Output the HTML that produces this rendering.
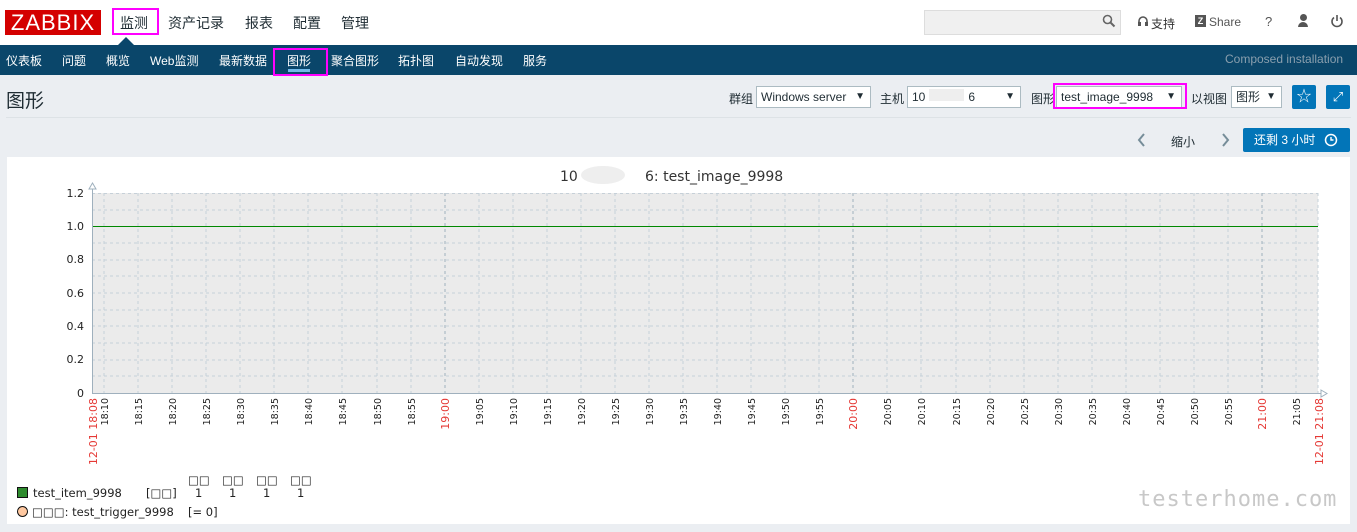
<!DOCTYPE html>
<html><head><meta charset="utf-8"><style>
*{box-sizing:border-box;margin:0;padding:0}
body{width:1357px;height:532px;overflow:hidden;background:#ebeef2;font-family:"Liberation Sans","Noto Sans CJK SC",sans-serif;font-size:13px;color:#1f2c33;position:relative}
.abs{position:absolute}
.top{left:0;top:0;width:1357px;height:45px;background:#fff}
.logo{left:5px;top:10px;width:96px;height:25px;background:#d40000;color:#fff;font-size:22px;line-height:25px;text-align:center;letter-spacing:1px}
.mm{top:13px;font-size:14px;color:#1f2c33}
.nav2{left:0;top:45px;width:1357px;height:30px;background:#0a466a}
.nav2 span{position:absolute;top:7px;color:#fff;font-size:12px}
.sel{background:#fff;border:1px solid #acbbc2;height:22px;font-size:12px;line-height:20px;padding-left:4px}
.btn{background:#0275b8;border-radius:2px}
.hl{border:2px solid #f0f}
</style></head><body>
<div class="abs top"></div>
<div class="abs logo">ZABBIX</div>
<div class="abs hl" style="left:112px;top:8px;width:47px;height:27px"></div>
<div class="abs mm" style="left:120px">监测</div>
<div class="abs mm" style="left:168px">资产记录</div>
<div class="abs mm" style="left:245px">报表</div>
<div class="abs mm" style="left:293px">配置</div>
<div class="abs mm" style="left:341px">管理</div>
<div class="abs" style="left:118px;top:37px;width:0;height:0;border-left:8px solid transparent;border-right:8px solid transparent;border-bottom:8px solid #0a466a"></div>
<div class="abs" style="left:924px;top:10px;width:197px;height:25px;background:#f0f0f0;border:1px solid #ddd"></div>
<svg class="abs" style="left:1102px;top:14px" width="14" height="14"><circle cx="5.5" cy="5.5" r="4" fill="none" stroke="#666" stroke-width="1.6"/><line x1="8.5" y1="8.5" x2="12.5" y2="12.5" stroke="#666" stroke-width="2"/></svg>
<svg class="abs" style="left:1137px;top:15px" width="12" height="13"><path d="M2 9 V6 A4 4 0 0 1 10 6 V9" fill="none" stroke="#555" stroke-width="1.6"/><rect x="1" y="7" width="3" height="4" fill="#555"/><rect x="8" y="7" width="3" height="4" fill="#555"/></svg>
<div class="abs" style="left:1151px;top:15px;font-size:12px;color:#333">支持</div>
<div class="abs" style="left:1195px;top:15px;width:11px;height:12px;background:#555;color:#fff;font-size:9px;text-align:center;font-weight:bold;line-height:12px">Z</div>
<div class="abs" style="left:1209px;top:15px;font-size:12px;color:#555">Share</div>
<div class="abs" style="left:1265px;top:14px;font-size:13px;color:#555">?</div>
<div class="abs" style="left:1298px;top:14px;width:10px;height:14px"><div style="width:7px;height:7px;border-radius:50%;background:#555;margin-left:1.5px"></div><div style="width:10px;height:5px;border-radius:5px 5px 0 0;background:#555;margin-top:1px"></div></div>
<svg class="abs" style="left:1330px;top:14px" width="14" height="14"><path d="M4 3.5 A5 5 0 1 0 10 3.5" fill="none" stroke="#555" stroke-width="1.6"/><line x1="7" y1="1" x2="7" y2="7" stroke="#555" stroke-width="1.6"/></svg>
<div class="abs nav2">
<span style="left:6px">仪表板</span><span style="left:62px">问题</span><span style="left:106px">概览</span><span style="left:150px">Web监测</span><span style="left:219px">最新数据</span><span style="left:287px">图形</span><span style="left:331px">聚合图形</span><span style="left:398px">拓扑图</span><span style="left:455px">自动发现</span><span style="left:523px">服务</span>
<span style="left:1225px;color:#8a9fae">Composed installation</span>
</div>
<div class="abs" style="left:288px;top:69px;width:22px;height:3px;background:#71b9e8"></div>
<div class="abs hl" style="left:273px;top:48px;width:55px;height:28px"></div>
<div class="abs" style="left:6px;top:86px;font-size:19px">图形</div>
<div class="abs" style="left:6px;top:117px;width:1345px;height:1px;background:#dde2e6"></div>
<div class="abs" style="left:729px;top:90px;font-size:12px">群组</div>
<div class="abs sel" style="left:756px;top:86px;width:115px">Windows server<span style="position:absolute;right:5px;font-size:10px">▼</span></div>
<div class="abs" style="left:880px;top:90px;font-size:12px">主机</div>
<div class="abs sel" style="left:907px;top:86px;width:114px">10<span style="display:inline-block;width:35px;height:12px;background:#eee;margin:0 4px"></span>6<span style="position:absolute;right:5px;font-size:10px">▼</span></div>
<div class="abs" style="left:1031px;top:90px;font-size:12px">图形</div>
<div class="abs sel" style="left:1056px;top:86px;width:126px">test_image_9998<span style="position:absolute;right:5px;font-size:10px">▼</span></div>
<div class="abs hl" style="left:1053px;top:83px;width:134px;height:26px"></div>
<div class="abs" style="left:1191px;top:90px;font-size:12px">以视图</div>
<div class="abs sel" style="left:1231px;top:86px;width:51px">图形<span style="position:absolute;right:5px;font-size:10px">▼</span></div>
<div class="abs btn" style="left:1292px;top:85px;width:24px;height:24px;color:#fff;text-align:center;line-height:24px;font-size:15px">☆</div>
<div class="abs btn" style="left:1326px;top:85px;width:24px;height:24px;color:#fff;text-align:center;line-height:24px;font-size:13px">⤢</div>
<svg class="abs" style="left:1137px;top:132px" width="10" height="16"><path d="M7 2 L2 8 L7 14" fill="none" stroke="#768d99" stroke-width="2"/></svg>
<div class="abs" style="left:1171px;top:133px;font-size:12px">缩小</div>
<svg class="abs" style="left:1220px;top:132px" width="10" height="16"><path d="M3 2 L8 8 L3 14" fill="none" stroke="#768d99" stroke-width="2"/></svg>
<div class="abs btn" style="left:1243px;top:128px;width:107px;height:24px;color:#fff;font-size:12px;line-height:24px;padding-left:11px">还剩 3 小时</div>
<svg class="abs" style="left:1324px;top:133px" width="14" height="14"><circle cx="7" cy="7" r="5.5" fill="none" stroke="#fff" stroke-width="1.5"/><path d="M7 4 V7 H9.5" fill="none" stroke="#fff" stroke-width="1.4"/></svg>
<div class="abs" style="left:7px;top:157px;width:1343px;height:367px;background:#fff"></div>
<svg class="abs" style="left:0;top:0" width="1357" height="532" font-family="DejaVu Sans, Liberation Sans, sans-serif">
<rect x="92" y="193" width="1226" height="200" fill="#ebebeb"/>
<g stroke="#c6d0d8" stroke-dasharray="3,3" stroke-width="1">
<line x1="92" x2="1318" y1="193.5" y2="193.5"/><line x1="92" x2="1318" y1="210" y2="210"/><line x1="92" x2="1318" y1="243" y2="243"/><line x1="92" x2="1318" y1="260" y2="260"/><line x1="92" x2="1318" y1="276" y2="276"/><line x1="92" x2="1318" y1="293" y2="293"/><line x1="92" x2="1318" y1="310" y2="310"/><line x1="92" x2="1318" y1="326" y2="326"/><line x1="92" x2="1318" y1="343" y2="343"/><line x1="92" x2="1318" y1="360" y2="360"/><line x1="92" x2="1318" y1="376" y2="376"/>
<line y1="193" y2="393" x1="104" x2="104"/><line y1="193" y2="393" x1="138" x2="138"/><line y1="193" y2="393" x1="172" x2="172"/><line y1="193" y2="393" x1="206" x2="206"/><line y1="193" y2="393" x1="240" x2="240"/><line y1="193" y2="393" x1="274" x2="274"/><line y1="193" y2="393" x1="308" x2="308"/><line y1="193" y2="393" x1="342" x2="342"/><line y1="193" y2="393" x1="377" x2="377"/><line y1="193" y2="393" x1="411" x2="411"/><line y1="193" y2="393" x1="445" x2="445" stroke="#9fb0bd"/><line y1="193" y2="393" x1="479" x2="479"/><line y1="193" y2="393" x1="513" x2="513"/><line y1="193" y2="393" x1="547" x2="547"/><line y1="193" y2="393" x1="581" x2="581"/><line y1="193" y2="393" x1="615" x2="615"/><line y1="193" y2="393" x1="649" x2="649"/><line y1="193" y2="393" x1="683" x2="683"/><line y1="193" y2="393" x1="717" x2="717"/><line y1="193" y2="393" x1="751" x2="751"/><line y1="193" y2="393" x1="785" x2="785"/><line y1="193" y2="393" x1="819" x2="819"/><line y1="193" y2="393" x1="853" x2="853" stroke="#9fb0bd"/><line y1="193" y2="393" x1="887" x2="887"/><line y1="193" y2="393" x1="921" x2="921"/><line y1="193" y2="393" x1="956" x2="956"/><line y1="193" y2="393" x1="990" x2="990"/><line y1="193" y2="393" x1="1024" x2="1024"/><line y1="193" y2="393" x1="1058" x2="1058"/><line y1="193" y2="393" x1="1092" x2="1092"/><line y1="193" y2="393" x1="1126" x2="1126"/><line y1="193" y2="393" x1="1160" x2="1160"/><line y1="193" y2="393" x1="1194" x2="1194"/><line y1="193" y2="393" x1="1228" x2="1228"/><line y1="193" y2="393" x1="1262" x2="1262" stroke="#9fb0bd"/><line y1="193" y2="393" x1="1296" x2="1296"/><line y1="193" y2="393" x1="1318" x2="1318"/>
</g>
<line x1="92" x2="1318" y1="226.5" y2="226.5" stroke="#008800" stroke-width="1"/>
<g stroke="#9fb0bd" fill="none"><line x1="92.5" y1="186" x2="92.5" y2="394"/><line x1="92" y1="393.5" x2="1324" y2="393.5"/><path d="M89 189 L92.5 183 L96 189 Z" fill="#fff"/><path d="M1321 390 L1327 393.5 L1321 397 Z" fill="#fff"/></g>
<text x="560" y="181" font-size="14" fill="#333">10</text>
<ellipse cx="603" cy="175" rx="22" ry="9" fill="#eee"/>
<text x="645" y="181" font-size="14" fill="#333">6: test_image_9998</text>
<g font-size="11" text-anchor="end" fill="#222">
<text x="84" y="197">1.2</text><text x="84" y="230">1.0</text><text x="84" y="263">0.8</text><text x="84" y="297">0.6</text><text x="84" y="330">0.4</text><text x="84" y="363">0.2</text><text x="84" y="397">0</text>
</g>
<g font-size="9.5" text-anchor="end" fill="#222">
<text transform="translate(108,398) rotate(-90)">18:10</text><text transform="translate(142,398) rotate(-90)">18:15</text><text transform="translate(176,398) rotate(-90)">18:20</text><text transform="translate(210,398) rotate(-90)">18:25</text><text transform="translate(244,398) rotate(-90)">18:30</text><text transform="translate(278,398) rotate(-90)">18:35</text><text transform="translate(312,398) rotate(-90)">18:40</text><text transform="translate(346,398) rotate(-90)">18:45</text><text transform="translate(381,398) rotate(-90)">18:50</text><text transform="translate(415,398) rotate(-90)">18:55</text><text transform="translate(449,398) rotate(-90)" fill="#e53935" font-size="11">19:00</text><text transform="translate(483,398) rotate(-90)">19:05</text><text transform="translate(517,398) rotate(-90)">19:10</text><text transform="translate(551,398) rotate(-90)">19:15</text><text transform="translate(585,398) rotate(-90)">19:20</text><text transform="translate(619,398) rotate(-90)">19:25</text><text transform="translate(653,398) rotate(-90)">19:30</text><text transform="translate(687,398) rotate(-90)">19:35</text><text transform="translate(721,398) rotate(-90)">19:40</text><text transform="translate(755,398) rotate(-90)">19:45</text><text transform="translate(789,398) rotate(-90)">19:50</text><text transform="translate(823,398) rotate(-90)">19:55</text><text transform="translate(857,398) rotate(-90)" fill="#e53935" font-size="11">20:00</text><text transform="translate(891,398) rotate(-90)">20:05</text><text transform="translate(925,398) rotate(-90)">20:10</text><text transform="translate(960,398) rotate(-90)">20:15</text><text transform="translate(994,398) rotate(-90)">20:20</text><text transform="translate(1028,398) rotate(-90)">20:25</text><text transform="translate(1062,398) rotate(-90)">20:30</text><text transform="translate(1096,398) rotate(-90)">20:35</text><text transform="translate(1130,398) rotate(-90)">20:40</text><text transform="translate(1164,398) rotate(-90)">20:45</text><text transform="translate(1198,398) rotate(-90)">20:50</text><text transform="translate(1232,398) rotate(-90)">20:55</text><text transform="translate(1266,398) rotate(-90)" fill="#e53935" font-size="11">21:00</text><text transform="translate(1300,398) rotate(-90)">21:05</text>
<text transform="translate(97,398) rotate(-90)" fill="#e53935" font-size="11">12-01 18:08</text><text transform="translate(1323,398) rotate(-90)" fill="#e53935" font-size="11">12-01 21:08</text>
</g>
<g font-size="11.5" fill="#222">
<text x="188" y="484">□□</text><text x="222" y="484">□□</text><text x="256" y="484">□□</text><text x="290" y="484">□□</text>
<rect x="17.5" y="487.5" width="10" height="10" fill="#2e8b2e" stroke="#111"/>
<text x="33" y="497">test_item_9998</text><text x="146" y="497">[□□]</text>
<text x="195" y="497">1</text><text x="229" y="497">1</text><text x="263" y="497">1</text><text x="297" y="497">1</text>
<circle cx="22.5" cy="511.5" r="5" fill="#ffc8a0" stroke="#111"/>
<text x="32" y="516">□□□: test_trigger_9998</text><text x="188" y="516">[= 0]</text>
</g>
<text x="1138" y="506" font-size="22" fill="#c8c8c8" letter-spacing="1" font-family="DejaVu Sans Mono, monospace">testerhome.com</text>
</svg>
</body></html>
